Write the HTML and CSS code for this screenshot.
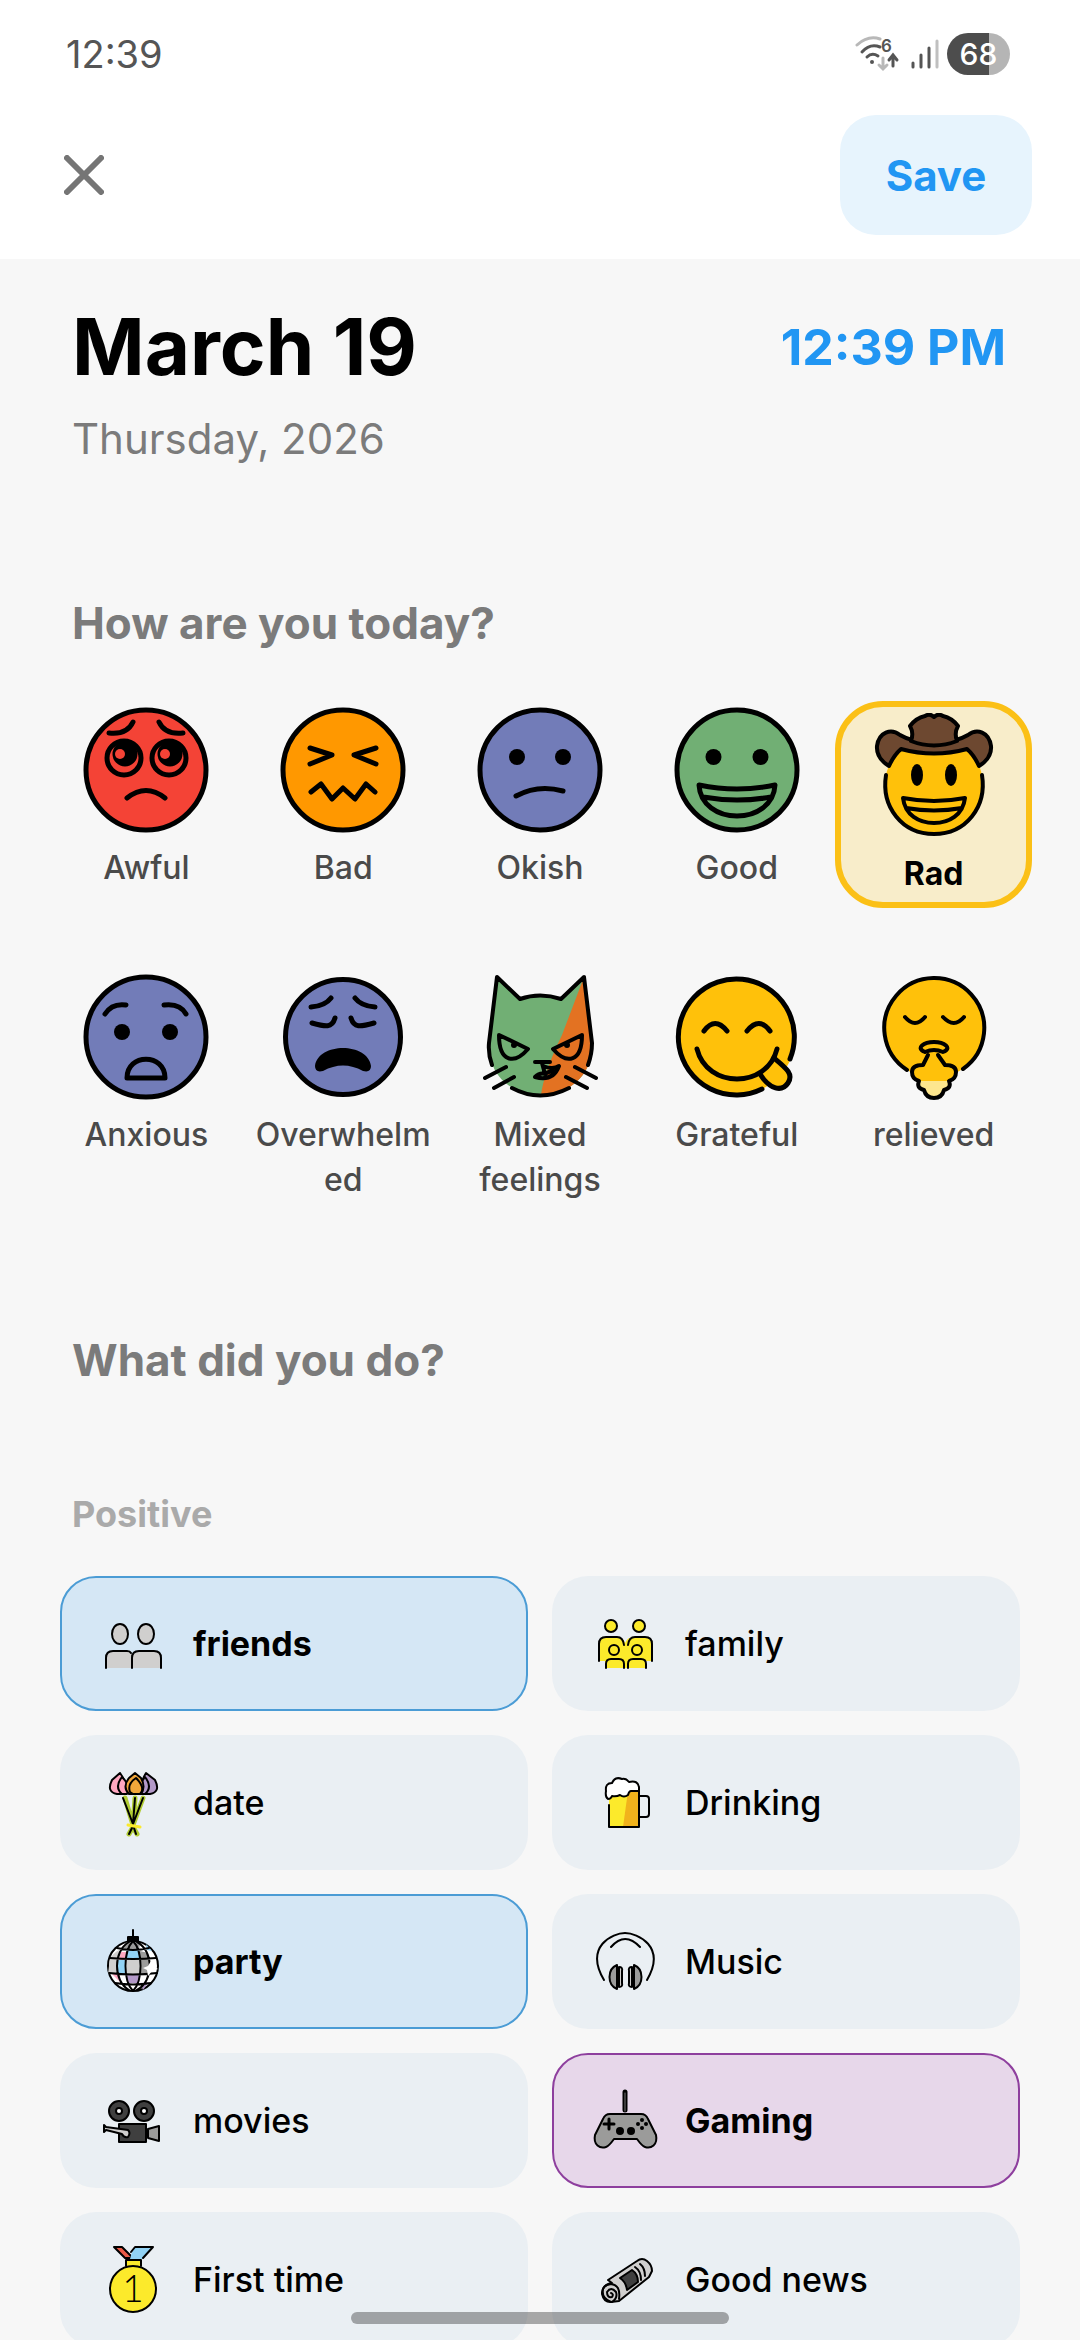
FILE: index.html
```html
<!DOCTYPE html>
<html lang="en">
<head>
<meta charset="utf-8">
<meta name="viewport" content="width=device-width, initial-scale=1">
<title>Mood entry</title>
<link rel="stylesheet" href="styles.css">
</head>
<body>
<div class="app">
  <div class="status">
    <span class="clock">12:39</span>
    <div class="status-icons">
      <svg class="wifi" viewBox="0 0 48 36" aria-hidden="true">
        <g fill="none" stroke-linecap="round" stroke-width="3">
          <path d="M2 9Q13-1 25 3" stroke="#b8b8b8"/>
          <path d="M7 16Q15 7 25 11M12 21Q17 16 23 20" stroke="#555"/>
          <path d="M28 22V32M24 29L28 33L32 29" stroke="#b8b8b8"/>
          <path d="M38 30V20M34 24L38 19L42 24" stroke="#555"/>
        </g>
        <circle cx="17" cy="26" r="2" fill="#555"/>
        <text x="26" y="16" font-family="Inter, sans-serif" font-size="17" font-weight="600" fill="#555">6</text>
      </svg>
      <svg class="signal" viewBox="0 0 28 32" aria-hidden="true">
        <g stroke-width="3" stroke-linecap="round" stroke="#555">
          <path d="M2 29V25M10 29V17M18 29V10"/><path d="M26 29V3" stroke="#c0c0c0"/>
        </g>
      </svg>
      <span class="battery">68</span>
    </div>
  </div>

  <header class="appbar">
    <button class="close" type="button" aria-label="Close">
      <svg viewBox="0 0 40 40" aria-hidden="true"><path d="M3 3L37 37M37 3L3 37" stroke="#757575" stroke-width="6" stroke-linecap="round"/></svg>
    </button>
    <button class="save" type="button">Save</button>
  </header>

  <main class="content">
    <div class="date-row">
      <h1>March 19</h1>
      <button class="time" type="button">12:39 PM</button>
    </div>
    <p class="weekday">Thursday, 2026</p>

    <h2 class="question">How are you today?</h2>
    <div class="moods">
      <label class="mood"><input type="radio" name="mood">
        <svg class="face" viewBox="0 0 126 126" aria-hidden="true">
          <circle cx="63" cy="63" r="60" fill="#f44336"/>
          <path d="M26 26Q44 28 50 15M76 15Q82 28 100 26M44 91Q63 76 82 91"/>
          <circle cx="41" cy="51" r="17"/><circle cx="86" cy="51" r="17"/>
          <g class="solid"><circle cx="42" cy="47" r="12.500"/><circle cx="87" cy="47" r="12.500"/></g>
          <g fill="#f44336" stroke="none"><circle cx="37" cy="47" r="5"/><circle cx="82" cy="47" r="5"/></g>
        </svg><span>Awful</span></label>
      <label class="mood"><input type="radio" name="mood">
        <svg class="face" viewBox="0 0 126 126" aria-hidden="true">
          <circle cx="63" cy="63" r="60" fill="#ff9800"/>
          <path d="M30 41L52 48L30 57M96 41L74 48L96 57M31 85L41 77L52 92L63 81L75 92L86 77L95 85"/>
        </svg><span>Bad</span></label>
      <label class="mood"><input type="radio" name="mood">
        <svg class="face" viewBox="0 0 126 126" aria-hidden="true">
          <circle cx="63" cy="63" r="60" fill="#727cb8"/>
          <g class="solid"><circle cx="40" cy="50" r="8"/><circle cx="86" cy="50" r="8"/></g>
          <path d="M39 89Q61 77 86 84"/>
        </svg><span>Okish</span></label>
      <label class="mood"><input type="radio" name="mood">
        <svg class="face" viewBox="0 0 126 126" aria-hidden="true">
          <circle cx="63" cy="63" r="60" fill="#71af74"/>
          <g class="solid"><circle cx="39.500" cy="50" r="8"/><circle cx="86.500" cy="50" r="8"/></g>
          <path d="M25 78Q63 86 101 78C100 98 82 109 63 109S26 98 25 78ZM29 90Q63 96 97 90"/>
        </svg><span>Good</span></label>
      <label class="mood selected"><input type="radio" name="mood" checked>
        <svg class="face thin" viewBox="0 0 126 126" aria-hidden="true">
          <circle cx="63" cy="72" r="49" fill="#ffc10a" stroke="none"/>
          <path d="M15 62C10 94 31 121 63 121S116 94 111 62"/>
          <path d="M18 53Q5 45 6 33C8 19 20 15 29 22Q39 28 63 32Q87 28 97 22C106 15 118 19 120 33Q121 45 108 53Q103 42 96 36Q63 45 30 36Q23 42 18 53Z" fill="#6d4830"/>
          <path d="M40 28Q43 20 39 13Q45 5 54 3Q59 0 63 4Q67 0 72 3Q81 5 87 13Q83 20 86 28Q63 37 40 28Z" fill="#6d4830"/>
          <g class="solid"><ellipse cx="46" cy="62" rx="6" ry="11"/><ellipse cx="80" cy="62" rx="6" ry="11"/></g>
          <path d="M32 85Q63 91 94 85C92 102 78 110 63 110S34 102 32 85ZM35 95Q63 100 91 95"/>
        </svg><span>Rad</span></label>

      <label class="mood"><input type="radio" name="mood">
        <svg class="face" viewBox="0 0 126 126" aria-hidden="true">
          <circle cx="63" cy="63" r="60" fill="#727cb8"/>
          <g class="solid"><circle cx="39" cy="58" r="8"/><circle cx="87" cy="58" r="8"/></g>
          <path d="M22 40Q29 29 43 31M81 31Q97 29 103 40M44 104C44 79 82 79 82 104Z"/>
        </svg><span>Anxious</span></label>
      <label class="mood"><input type="radio" name="mood">
        <svg class="face" viewBox="0 0 126 126" aria-hidden="true">
          <circle cx="63" cy="63" r="57.500" fill="#727cb8"/>
          <path d="M31 33Q45 32 51 24M95 33Q81 32 75 24M32 49C46 53 52 54 55 44M94 49C80 53 74 54 71 44"/>
          <path class="solid" d="M35 92C38 68 88 68 91 92Q91 99 83 97Q63 86 43 97Q35 99 35 92Z"/>
        </svg><span>Overwhelmed</span></label>
      <label class="mood"><input type="radio" name="mood">
        <svg class="face thin" viewBox="0 0 126 126" aria-hidden="true">
          <path d="M20 3L43 25Q63 18 84 25L107 3L115 69C116 103 90 121 63 121S11 103 12 69Z" fill="#71af74" stroke="none"/>
          <path d="M107 3L115 69C116 103 90 121 64 121Q67 98 85 61Z" fill="#e37222" stroke="none"/>
          <path d="M15 91Q11 80 12 69L20 3L43 25Q63 18 84 25L107 3L115 69Q115 80 111 91M35 114Q63 129 92 114M8 104L29 93M17 114L37 103M119 104L98 93M110 114L89 103"/>
          <path d="M22 61L51 75C37 91 22 88 22 61ZM105 61L76 75C90 91 105 88 105 61ZM58 88H73M65 89L68 100M66 92Q76 96 82 92Q76 108 58 103Q63 98 68 100Q73 97 76 97"/>
          <g class="solid"><circle cx="37" cy="71" r="3"/><circle cx="90" cy="71" r="3"/></g>
        </svg><span>Mixed feelings</span></label>
      <label class="mood"><input type="radio" name="mood">
        <svg class="face" viewBox="0 0 126 126" aria-hidden="true">
          <circle cx="63" cy="63" r="58" fill="#ffc10a" stroke="none"/>
          <path d="M116 85A58 58 0 1 0 88 115"/>
          <path d="M86 100C96 116 108 118 114 109S112 94 100 84" fill="#ffc10a"/>
          <path d="M30 57Q41 42 53 57M73 57Q85 42 96 57M23 75C33 115 93 115 103 75"/>
        </svg><span>Grateful</span></label>
      <label class="mood"><input type="radio" name="mood">
        <svg class="face thin" viewBox="0 0 126 126" aria-hidden="true">
          <circle cx="63" cy="54" r="50" fill="#ffc10a" stroke="none"/>
          <path d="M36 96A50 50 0 1 1 92 95"/>
          <path d="M57 81L52 91Q41 91 41 98T48 107Q45 114 53 116Q55 124 63 124T73 116Q81 114 78 107Q85 105 85 98T74 91L68 81Z" fill="#ffc10a" stroke="none"/>
          <path d="M47 107H79Q80 114 73 116Q71 124 63 124T53 116Q45 114 47 107Z" fill="#fde68e" stroke="none"/>
          <path d="M57 81L52 91Q41 91 41 98T48 107Q45 114 53 116Q55 124 63 124T73 116Q81 114 78 107Q85 105 85 98T74 91L67 81"/>
          <path d="M34 43Q44 55 54 43M72 43Q83 55 93 43M54 78C44 74 53 68 63 68S82 74 72 78Q63 74 54 78"/>
        </svg><span>relieved</span></label>
    </div>

    <h2 class="question second">What did you do?</h2>
    <h3 class="group">Positive</h3>
    <div class="activities">
      <label class="activity blue"><input type="checkbox" checked>
        <svg class="icon" viewBox="0 0 72 72" aria-hidden="true">
          <g fill="#d0cfce"><ellipse cx="23" cy="26" rx="8" ry="10"/><ellipse cx="49" cy="26" rx="8" ry="10"/>
          <path d="M9 60V50Q9 43 16 43H30Q34 43 35 47V60Z" stroke="none"/><path d="M9 60V50Q9 43 16 43H30Q33 43 34 45"/>
          <path d="M35 60V50Q35 43 42 43H57Q64 43 64 50V60"/></g>
        </svg><span>friends</span></label>
      <label class="activity"><input type="checkbox">
        <svg class="icon" viewBox="0 0 72 72" aria-hidden="true">
          <g fill="#fcea2b"><circle cx="22" cy="18" r="6"/><circle cx="50" cy="18" r="6"/>
          <path d="M10 53V36Q10 29 17 29H28Q34 29 36 35Q38 29 45 29H56Q63 29 63 36V53H57V60H16V53Z" stroke="none"/>
          <path d="M10 53V36Q10 29 17 29H28Q34 29 35 37M39 37Q40 29 46 29H56Q63 29 63 36V53" fill="none"/>
          <circle cx="25" cy="42" r="5"/><circle cx="48" cy="42" r="5"/>
          <path d="M17 60V56Q17 51 22 51H30Q35 51 35 56V60M39 60V56Q39 51 44 51H52Q57 51 57 56V60"/></g>
        </svg><span>family</span></label>

      <label class="activity"><input type="checkbox">
        <svg class="icon" viewBox="0 0 72 72" aria-hidden="true">
          <path d="M28 31L36 58L46 31M38 31L36 60L32 67M36 60L40 67" stroke="#b1cc33" stroke-width="5"/>
          <path d="M26 31L36 57M38 31L36 57L46 31M35 61L32 67M37 61L39 67"/>
          <path d="M31 58L43 60" stroke="#fcea2b" stroke-width="3"/>
          <g fill="#ffa7c0"><path d="M20 27Q9 25 15 13L23 6Q29 14 29 22L25 27Z"/><path d="M25 27Q17 20 25 10Q35 20 30 27Z"/></g>
          <g fill="#b399c8"><path d="M53 27Q64 25 58 13L49 6Q44 14 44 22L48 27Z"/><path d="M48 27Q56 20 48 10Q40 20 43 27Z"/></g>
          <g fill="#f1a63a"><path d="M32 27Q25 20 32 11L38 6L44 11Q49 20 44 27Z"/><path d="M33 25Q30 17 39 11Q49 21 43 27H36Z"/></g>
        </svg><span>date</span></label>
      <label class="activity"><input type="checkbox">
        <svg class="icon" viewBox="0 0 72 72" aria-hidden="true">
          <path d="M20 26H50V60H20Z" fill="#fcea2b" stroke="none"/><path d="M39 24H50V60H34Z" fill="#f1b31c" stroke="none"/>
          <path d="M20 38V60H50V24M50 29H57Q60 29 60 32V47Q60 50 57 50H50"/>
          <path d="M19 32Q16 30 17 24Q16 16 23 16Q26 9 33 12Q37 11 40 15Q49 13 50 20V24H42Q40 24 39 28Q35 31 31 28Q27 30 23 29Q22 32 19 32Z" fill="#fff"/>
        </svg><span>Drinking</span></label>

      <label class="activity blue"><input type="checkbox" checked>
        <svg class="icon" viewBox="0 0 72 72" aria-hidden="true">
          <circle cx="36" cy="40" r="25" fill="#fff"/>
          <g stroke="none"><path d="M30 32H42V48H30ZM13 32Q18 26 22 24L20 48H11Z" fill="#d0cfce"/><path d="M30 24H42V32H30ZM20 34H29V48H20ZM49 18L55 25L50 24Z" fill="#92d3f5"/><path d="M24 26H30V34H22ZM15 48H22L24 57Z" fill="#ffa7c0"/><path d="M30 48H42V57H30ZM43 57L52 56L46 64Z" fill="#b399c8"/><path d="M28 17L36 15L43 18L42 24L24 23ZM43 25L51 27L52 47H43Z" fill="#9b9b9a"/></g>
          <path d="M36 15C26 25 26 55 36 65C46 55 46 25 36 15M32 16C16 25 16 55 32 64M40 16C57 25 57 55 40 64M20 22Q36 26 52 22M13 32Q36 34 59 32M12 47Q36 50 60 47M18 57Q36 60 54 57M36 12V4"/>
          <path d="M31 11H41V15H31Z" fill="#000"/>
          <path d="M54 35L56 40L61 43L55 45L51 50L50 44L46 42L51 40Z" fill="#fff" stroke="none"/>
        </svg><span>party</span></label>
      <label class="activity"><input type="checkbox">
        <svg class="icon" viewBox="0 0 72 72" aria-hidden="true">
          <path d="M15 54C-5 20 24 7 36 7S78 20 58 54M22 21Q36 5 51 21"/>
          <g fill="#9b9b9a"><path d="M28 39C18 43 18 59 28 63ZM45 39C55 43 55 59 45 63Z"/></g>
          <path d="M30 41Q34 41 33 45V57Q34 61 30 61ZM43 41Q39 41 40 45V57Q39 61 43 61Z" fill="#d0cfce"/>
        </svg><span>Music</span></label>

      <label class="activity"><input type="checkbox">
        <svg class="icon" viewBox="0 0 72 72" aria-hidden="true">
          <g fill="#3f3f3f"><circle cx="22" cy="26" r="10"/><circle cx="47" cy="26" r="10"/><path d="M22 39H49V57H22Z"/></g>
          <g fill="#fff"><circle cx="22" cy="26" r="3"/><circle cx="47" cy="26" r="3"/></g>
          <path d="M51 44L62 41V56L51 53Z" fill="#9b9b9a"/>
          <path d="M7 40L9 42L31 45Q34 48 31 52Q27 53 25 49L9 45L7 47Z" fill="#d0cfce"/>
        </svg><span>movies</span></label>
      <label class="activity purple"><input type="checkbox" checked>
        <svg class="icon" viewBox="0 0 72 72" aria-hidden="true">
          <path d="M36 7V25" stroke-width="5"/><path d="M36 8V26" stroke="#777" stroke-width="1"/>
          <path d="M21 29H52Q57 29 59 34L67 50C69 60 62 64 56 62Q53 61 48 54H25Q20 61 17 62C11 64 4 60 6 50L14 34Q16 29 21 29Z" fill="#9b9b9a"/>
          <path d="M20 34V44M15 39H25" stroke-width="3"/>
          <g fill="#000" stroke="none"><circle cx="31" cy="46" r="4"/><circle cx="42" cy="46" r="4"/><circle cx="53" cy="35" r="2"/><circle cx="53" cy="43" r="2"/><circle cx="49" cy="39" r="2"/><circle cx="57" cy="39" r="2"/></g>
        </svg><span>Gaming</span></label>

      <label class="activity"><input type="checkbox">
        <svg class="icon" viewBox="0 0 72 72" aria-hidden="true">
          <path d="M17 3H25L36 14H28Z" fill="#ea5a47"/><path d="M38 3H56L45 15H33L35 8Z" fill="#92d3f5" stroke="none"/><path d="M34 8L38 3H56L46 14"/>
          <path d="M29 22V16H44V22" fill="#fcea2b"/><circle cx="36" cy="45" r="23" fill="#fcea2b"/>
          <text x="36" y="58" text-anchor="middle" font-family="Lato, sans-serif" font-size="37" font-weight="300" fill="#000" stroke="none">1</text>
        </svg><span>First time</span></label>
      <label class="activity"><input type="checkbox">
        <svg class="icon" viewBox="0 0 72 72" aria-hidden="true">
          <path d="M19 36L48 17Q53 13 58 17T63 27L60 33L30 57L22 58Q12 54 14 45Q16 40 23 39Z" fill="#d0cfce"/>
          <path d="M31 34L43 26Q49 30 49 38L38 46Q37 38 31 34Z" fill="#3f3f3f"/>
          <path d="M46 23Q52 27 52 36M51 20Q56 24 56 32"/>
          <path d="M30 55Q32 41 22 40Q13 41 13 50Q15 59 23 58Q29 54 27 48Q22 42 18 48Q18 54 23 53Q25 50 22 49"/>
        </svg><span>Good news</span></label>
    </div>
  </main>
  <div class="home-bar"></div>
</div>
</body>
</html>
```

FILE: styles.css
```css
* { box-sizing: border-box; }

body {
  margin: 0;
  font-family: Inter, "Noto Sans", sans-serif;
  background: #f7f7f7;
  color: #000;
}

button {
  border: 0;
  padding: 0;
  background: none;
  font-family: inherit;
}

h1, h2, h3, p { margin: 0; }
svg { display: block; }

.app {
  height: 100vh;
  display: flex;
  flex-direction: column;
}

/* Status bar */
.status {
  display: flex;
  justify-content: space-between;
  align-items: center;
  height: 108px;
  padding: 0 70px 0 66px;
  background: #fff;
}
.clock { font-size: 38px; line-height: 48px; color: #555; }
.status-icons { display: flex; align-items: center; gap: 8px; }
.wifi { width: 48px; height: 36px; }
.signal { width: 28px; height: 32px; }
.battery {
  width: 63px;
  border-radius: 21px;
  background: linear-gradient(to right, #4d4d4d 67%, #b5b5b5 67%);
  color: #fff;
  font-size: 30px;
  font-weight: 500;
  line-height: 42px;
  text-align: center;
}

/* Top bar */
.appbar {
  display: flex;
  justify-content: space-between;
  align-items: center;
  padding: 7px 48px 24px 64px;
  background: #fff;
}
.close svg { width: 40px; height: 40px; }
.save {
  width: 192px;
  height: 120px;
  border-radius: 36px;
  background: #e7f4fd;
  color: #2196f3;
  font-size: 42px;
  font-weight: 700;
}

/* Entry */
.content {
  flex: 1;
  min-height: 0;
  padding-top: 40px;
  overflow-y: auto;
  scrollbar-width: none;
}
.date-row {
  display: flex;
  justify-content: space-between;
  align-items: center;
  padding: 0 74px 0 72px;
}
h1 { font-size: 78px; line-height: 96px; font-weight: 700; }
.time { font-size: 50px; line-height: 64px; font-weight: 700; color: #2196f3; }
.weekday {
  margin-top: 16px;
  padding: 0 72px;
  font-size: 42px;
  line-height: 56px;
  color: #7b7b7b;
}
.question {
  margin-top: 128px;
  padding: 0 72px;
  font-size: 44px;
  line-height: 56px;
  font-weight: 700;
  color: #7b7b7b;
}
.question.second { margin-top: 124px; }
.group {
  margin-top: 102px;
  padding: 0 72px;
  font-size: 36px;
  line-height: 48px;
  font-weight: 700;
  color: #aaa;
}

.mood input, .activity input {
  position: absolute;
  opacity: 0;
  pointer-events: none;
}

.moods {
  display: grid;
  grid-template-columns: repeat(5, 1fr);
  align-items: start;
  row-gap: 60px;
  margin-top: 50px;
  padding: 0 48px;
}
.mood {
  display: flex;
  flex-direction: column;
  align-items: center;
  gap: 12px;
  padding: 6px;
  font-size: 32px;
  line-height: 45px;
  font-weight: 500;
  color: #4a4a4a;
  text-align: center;
}
.mood span { max-width: 100%; overflow-wrap: anywhere; }
.mood.selected {
  border: 6px solid #fbc016;
  border-radius: 48px;
  background: #f8edca;
  color: #000;
  font-weight: 700;
}
.face {
  width: 126px;
  height: 126px;
  fill: none;
  stroke: #000;
  stroke-width: 5px;
  stroke-linecap: round;
  stroke-linejoin: round;
}
.face.thin { stroke-width: 4px; }
.face .solid { fill: #000; stroke: none; }

.activities {
  display: grid;
  grid-template-columns: repeat(2, 1fr);
  gap: 24px;
  margin-top: 38px;
  padding: 0 60px;
}
.activity {
  display: flex;
  align-items: center;
  gap: 24px;
  height: 135px;
  padding: 0 35px;
  border: 2px solid transparent;
  border-radius: 36px;
  background: #eaeff3;
  background-clip: border-box;
  font-size: 34px;
  line-height: 48px;
  font-weight: 500;
}
.activity.blue { border-color: #4b9cd5; background: #d5e7f5; font-weight: 700; }
.activity.purple { border-color: #8e3f9e; background: #e7d7ea; font-weight: 700; }
.icon {
  width: 72px;
  height: 72px;
  flex: none;
  fill: none;
  stroke: #000;
  stroke-width: 2px;
  stroke-linecap: round;
  stroke-linejoin: round;
}

/* Gesture bar, above the scrolling entry */
.home-bar {
  position: fixed;
  bottom: 16px;
  left: 50%;
  width: 35%;
  height: 12px;
  border-radius: 6px;
  background: rgba(0, 0, 0, 0.32);
  transform: translateX(-50%);
}
```
